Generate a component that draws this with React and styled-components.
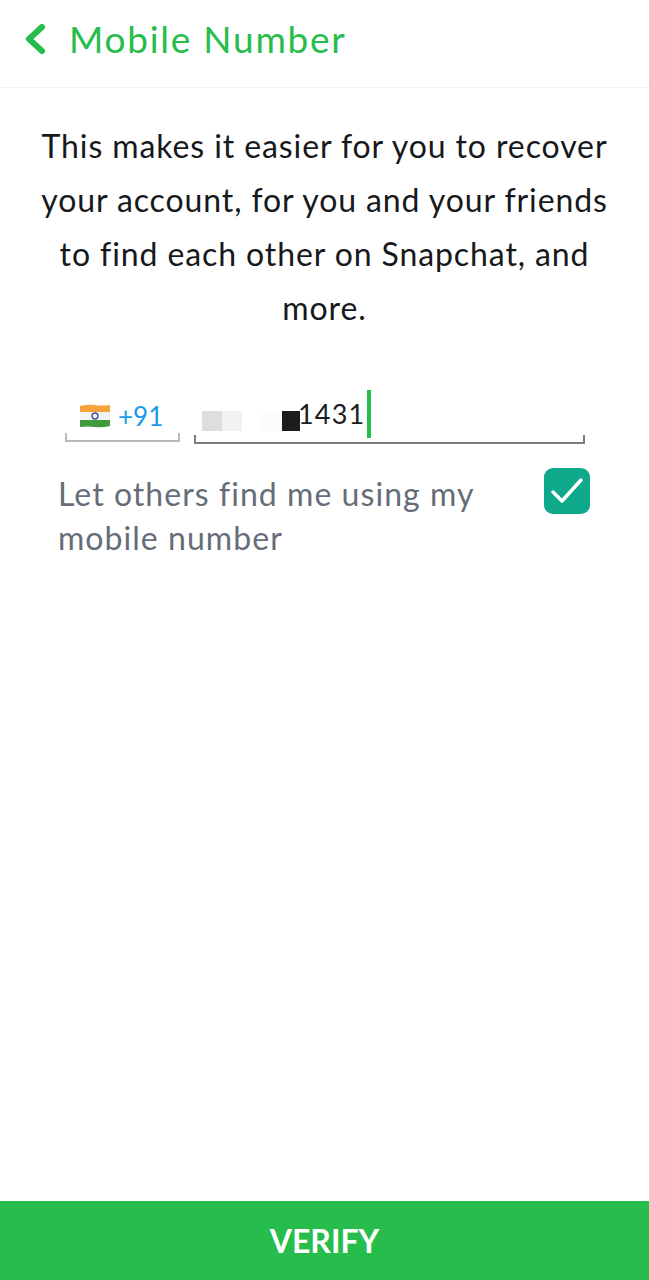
import React from 'react'
import styled, { createGlobalStyle } from 'styled-components'

const GlobalStyle = createGlobalStyle`
    html, body {
        margin: 0;
        padding: 0;
        background: #fff;
    }
    body {
        font-family: "Lato", "Liberation Sans", sans-serif;
    }
`

const Page = styled.div`
    width: 649px;
    height: 1280px;
    display: flex;
    flex-direction: column;
    background: #fff;
`

const Header = styled.header`
    height: 88px;
    box-sizing: border-box;
    border-bottom: 1px solid #f3f3f3;
    display: flex;
    align-items: center;
    padding-left: 25px;
    padding-bottom: 10px;
    gap: 24px;
    flex-shrink: 0;
`

const Title = styled.h1`
    margin: 0;
    font-size: 37px;
    font-weight: 400;
    letter-spacing: 1.75px;
    color: #27bd4c;
`

const Main = styled.main`
    flex: 1;
    padding-top: 31px;
    display: flex;
    flex-direction: column;
`

const Intro = styled.p`
    margin: 0 auto;
    width: 576px;
    font-size: 32px;
    line-height: 54px;
    letter-spacing: 0.9px;
    text-align: center;
    color: #16191c;
`

const PhoneRow = styled.div`
    margin-top: 57px;
    padding-left: 65px;
    display: flex;
    gap: 14px;
    align-items: flex-start;
`

const Bracket = styled.div`
    box-sizing: border-box;
    display: flex;
    align-items: center;
    height: ${p => p.$height}px;
    width: ${p => p.$width}px;
    position: relative;
    border-bottom: 2px solid ${p => p.$line};

    &::before, &::after {
        content: '';
        position: absolute;
        bottom: 0;
        width: 2px;
        height: 7px;
        background: ${p => p.$line};
    }
    &::before { left: 0; }
    &::after { right: 0; }
`

const CountryCode = styled.span`
    font-size: 26px;
    color: #1a9bea;
    margin-left: 8px;
`

const FlagIcon = styled.svg`
    margin-left: 15px;
    flex-shrink: 0;
`

const NumberValue = styled.div`
    display: flex;
    align-items: center;
    padding-left: 8px;
    height: 100%;
`

const Mosaic = styled.span`
    width: ${p => p.$width}px;
    height: 20px;
    margin-top: 8px;
    background: ${p => p.$color};
    flex-shrink: 0;
`

const Digits = styled.span`
    font-size: 27px;
    letter-spacing: 1.2px;
    color: #1b1d20;
    margin-top: -8px;
    margin-left: -2px;
`

const Caret = styled.span`
    width: 4px;
    height: 48px;
    margin-top: -7px;
    margin-left: 2px;
    background: #27bd4c;
`

const Discover = styled.div`
    margin-top: 24px;
    padding: 0 59px 0 58px;
    display: flex;
    justify-content: space-between;
    align-items: flex-start;
`

const DiscoverLabel = styled.span`
    width: 440px;
    padding-top: 4px;
    font-size: 32px;
    line-height: 44px;
    letter-spacing: 1.05px;
    color: #656d78;
`

const CheckBox = styled.span`
    width: 46px;
    height: 46px;
    border-radius: 9px;
    background: #0ea98a;
    display: flex;
    align-items: center;
    justify-content: center;
`

const VerifyButton = styled.button`
    height: 79px;
    border: 0;
    flex-shrink: 0;
    background: #27bd4c;
    color: #fff;
    font-family: inherit;
    font-size: 32px;
    font-weight: 700;
    padding: 0;
`

const mosaics = [
    { color: '#dedede', width: 20 },
    { color: '#f2f2f2', width: 20 },
    { color: '#fff', width: 20 },
    { color: '#fbfcfc', width: 20 },
    { color: '#1b1c1e', width: 18 },
]

export default function App() {
    return (
        <Page>
            <GlobalStyle />
            <Header>
                <svg width="20" height="30" viewBox="0 0 20 30" fill="none">
                    <path d="M17 3 L4 15 L17 27" stroke="#27bd4c" strokeWidth="6" strokeLinecap="round" strokeLinejoin="round" />
                </svg>
                <Title>Mobile Number</Title>
            </Header>
            <Main>
                <Intro>
                    This makes it easier for you to recover your account, for you and your friends to find each other on Snapchat, and more.
                </Intro>
                <PhoneRow>
                    <Bracket $width={115} $height={50} $line="#b9b9b9">
                        <FlagIcon width="30" height="24" viewBox="0 0 30 24">
                            <path d="M0 2 Q8 0 15 1 T30 1 V8 H0 Z" fill="#f6a33b" />
                            <rect y="8" width="30" height="8" fill="#f4f4f4" />
                            <path d="M0 16 H30 V22 Q22 24 15 23 T0 23 Z" fill="#3f9b3c" />
                            <circle cx="15" cy="12" r="3" fill="none" stroke="#3c4e9c" strokeWidth="1.4" />
                        </FlagIcon>
                        <CountryCode>+91</CountryCode>
                    </Bracket>
                    <Bracket $width={391} $height={52} $line="#7d7d7d">
                        <NumberValue>
                            {mosaics.map((m, i) => <Mosaic key={i} $color={m.color} $width={m.width} />)}
                            <Digits>1431</Digits>
                            <Caret />
                        </NumberValue>
                    </Bracket>
                </PhoneRow>
                <Discover>
                    <DiscoverLabel>Let others find me using my mobile number</DiscoverLabel>
                    <CheckBox>
                        <svg width="34" height="28" viewBox="0 0 34 28" fill="none">
                            <path d="M3 15 L12 24 L31 3" stroke="#fff" strokeWidth="3.5" strokeLinecap="round" strokeLinejoin="round" />
                        </svg>
                    </CheckBox>
                </Discover>
            </Main>
            <VerifyButton>VERIFY</VerifyButton>
        </Page>
    )
}
